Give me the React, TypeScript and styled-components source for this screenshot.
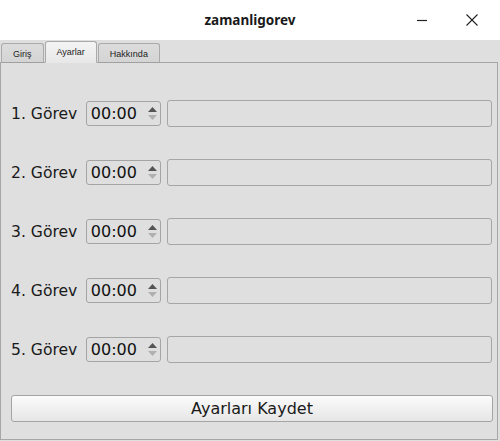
import React from 'react';
import styled, { createGlobalStyle } from 'styled-components';

const GlobalStyle = createGlobalStyle`
    html, body {
        margin: 0;
        padding: 0;
        background: #dfdfdf;
    }
    body {
        font-family: "DejaVu Sans", sans-serif;
    }
`;

const Window = styled.div`
    width: 500px;
    height: 441px;
    display: flex;
    flex-direction: column;
    background: #dfdfdf;
    overflow: hidden;
`;

const TitleBar = styled.div`
    height: 40px;
    background: #ffffff;
    display: flex;
    align-items: center;
    justify-content: center;
    position: relative;
`;

const Title = styled.div`
    font-family: "Noto Sans", sans-serif;
    font-weight: 700;
    font-size: 13.5px;
    color: #1a1a1a;
    margin-top: -1px;
`;

const Controls = styled.div`
    position: absolute;
    right: 18px;
    top: 0;
    height: 40px;
    display: flex;
    align-items: center;
    gap: 30px;
`;

const ControlButton = styled.div`
    width: 20px;
    height: 20px;
    display: flex;
    align-items: center;
    justify-content: center;
`;

const TabBar = styled.div`
    display: flex;
    align-items: flex-end;
    height: 23px;
    padding-left: 1px;
    margin-bottom: -1px;
    position: relative;
    z-index: 1;
`;

const Tab = styled.div<{ $active?: boolean }>`
    font-family: "Liberation Sans", Arial, sans-serif;
    font-size: 9px;
    color: #222;
    height: ${(p) => (p.$active ? '22px' : '20px')};
    box-sizing: border-box;
    padding: ${(p) => (p.$active ? '0 11px' : '2px 11px 0')};
    display: flex;
    align-items: center;
    justify-content: center;
    border: 1px solid #aaaaaa;
    border-bottom: ${(p) => (p.$active ? '1px solid #e8e8e8' : '1px solid #a0a0a0')};
    border-radius: 3px 3px 0 0;
    background: ${(p) =>
        p.$active
            ? 'linear-gradient(#f4f4f4, #e8e8e8)'
            : 'linear-gradient(#dcdcdc, #d4d4d4)'};
    & + & {
        margin-left: 1px;
    }
`;

const Pane = styled.div`
    width: 498px;
    height: 378px;
    box-sizing: border-box;
    border: 1px solid #a6a6a6;
    padding: 37px 5px 0 10px;
    display: flex;
    flex-direction: column;
    gap: 32px;
`;

const Row = styled.div`
    display: flex;
    align-items: center;
    height: 27px;
`;

const Label = styled.div`
    width: 75px;
    font-size: 15.6px;
    color: #1a1a1a;
    white-space: nowrap;
`;

const Spin = styled.div`
    width: 75px;
    height: 25px;
    box-sizing: border-box;
    border: 1px solid #a4a4a4;
    border-radius: 3px;
    display: flex;
    align-items: center;
    margin-right: 6px;
`;

const SpinValue = styled.div`
    flex: 1;
    font-size: 16px;
    color: #111;
    padding-left: 4px;
`;

const SpinArrows = styled.div`
    width: 14px;
    display: flex;
    flex-direction: column;
    align-items: center;
    gap: 3px;
`;

const TextField = styled.div`
    width: 326px;
    height: 27px;
    box-sizing: border-box;
    border: 1px solid #a6a6a6;
    border-radius: 3px;
    background: #dfdfdf;
`;

const SaveButton = styled.div`
    width: 482px;
    height: 27px;
    box-sizing: border-box;
    border: 1px solid #a4a4a4;
    border-radius: 3px;
    background: linear-gradient(#fbfbfb, #e6e6e6);
    display: flex;
    align-items: center;
    justify-content: center;
    font-size: 16px;
    color: #1a1a1a;
`;

const Arrow = ({ up, color }: { up?: boolean; color: string }) => (
    <svg width="9" height="5" viewBox="0 0 9 5">
        {up ? <polygon points="0,5 9,5 4.5,0" fill={color} /> : <polygon points="0,0 9,0 4.5,5" fill={color} />}
    </svg>
);

const rows = [1, 2, 3, 4, 5];

export default function App() {
    return (
        <Window>
            <GlobalStyle />
            <TitleBar>
                <Title>zamanligorev</Title>
                <Controls>
                    <ControlButton>
                        <svg width="12" height="12" viewBox="0 0 12 12">
                            <line x1="1" y1="6.5" x2="11" y2="6.5" stroke="#222" strokeWidth="1.2" />
                        </svg>
                    </ControlButton>
                    <ControlButton>
                        <svg width="14" height="14" viewBox="0 0 14 14">
                            <path d="M1.5 1.5 L12.5 12.5 M12.5 1.5 L1.5 12.5" stroke="#222" strokeWidth="1.1" />
                        </svg>
                    </ControlButton>
                </Controls>
            </TitleBar>
            <TabBar>
                <Tab>Giriş</Tab>
                <Tab $active>Ayarlar</Tab>
                <Tab>Hakkında</Tab>
            </TabBar>
            <Pane>
                {rows.map((n) => (
                    <Row key={n}>
                        <Label>{n}. Görev</Label>
                        <Spin>
                            <SpinValue>00:00</SpinValue>
                            <SpinArrows>
                                <Arrow up color="#555" />
                                <Arrow color="#b0b0b0" />
                            </SpinArrows>
                        </Spin>
                        <TextField />
                    </Row>
                ))}
                <SaveButton>Ayarları Kaydet</SaveButton>
            </Pane>
        </Window>
    );
}
